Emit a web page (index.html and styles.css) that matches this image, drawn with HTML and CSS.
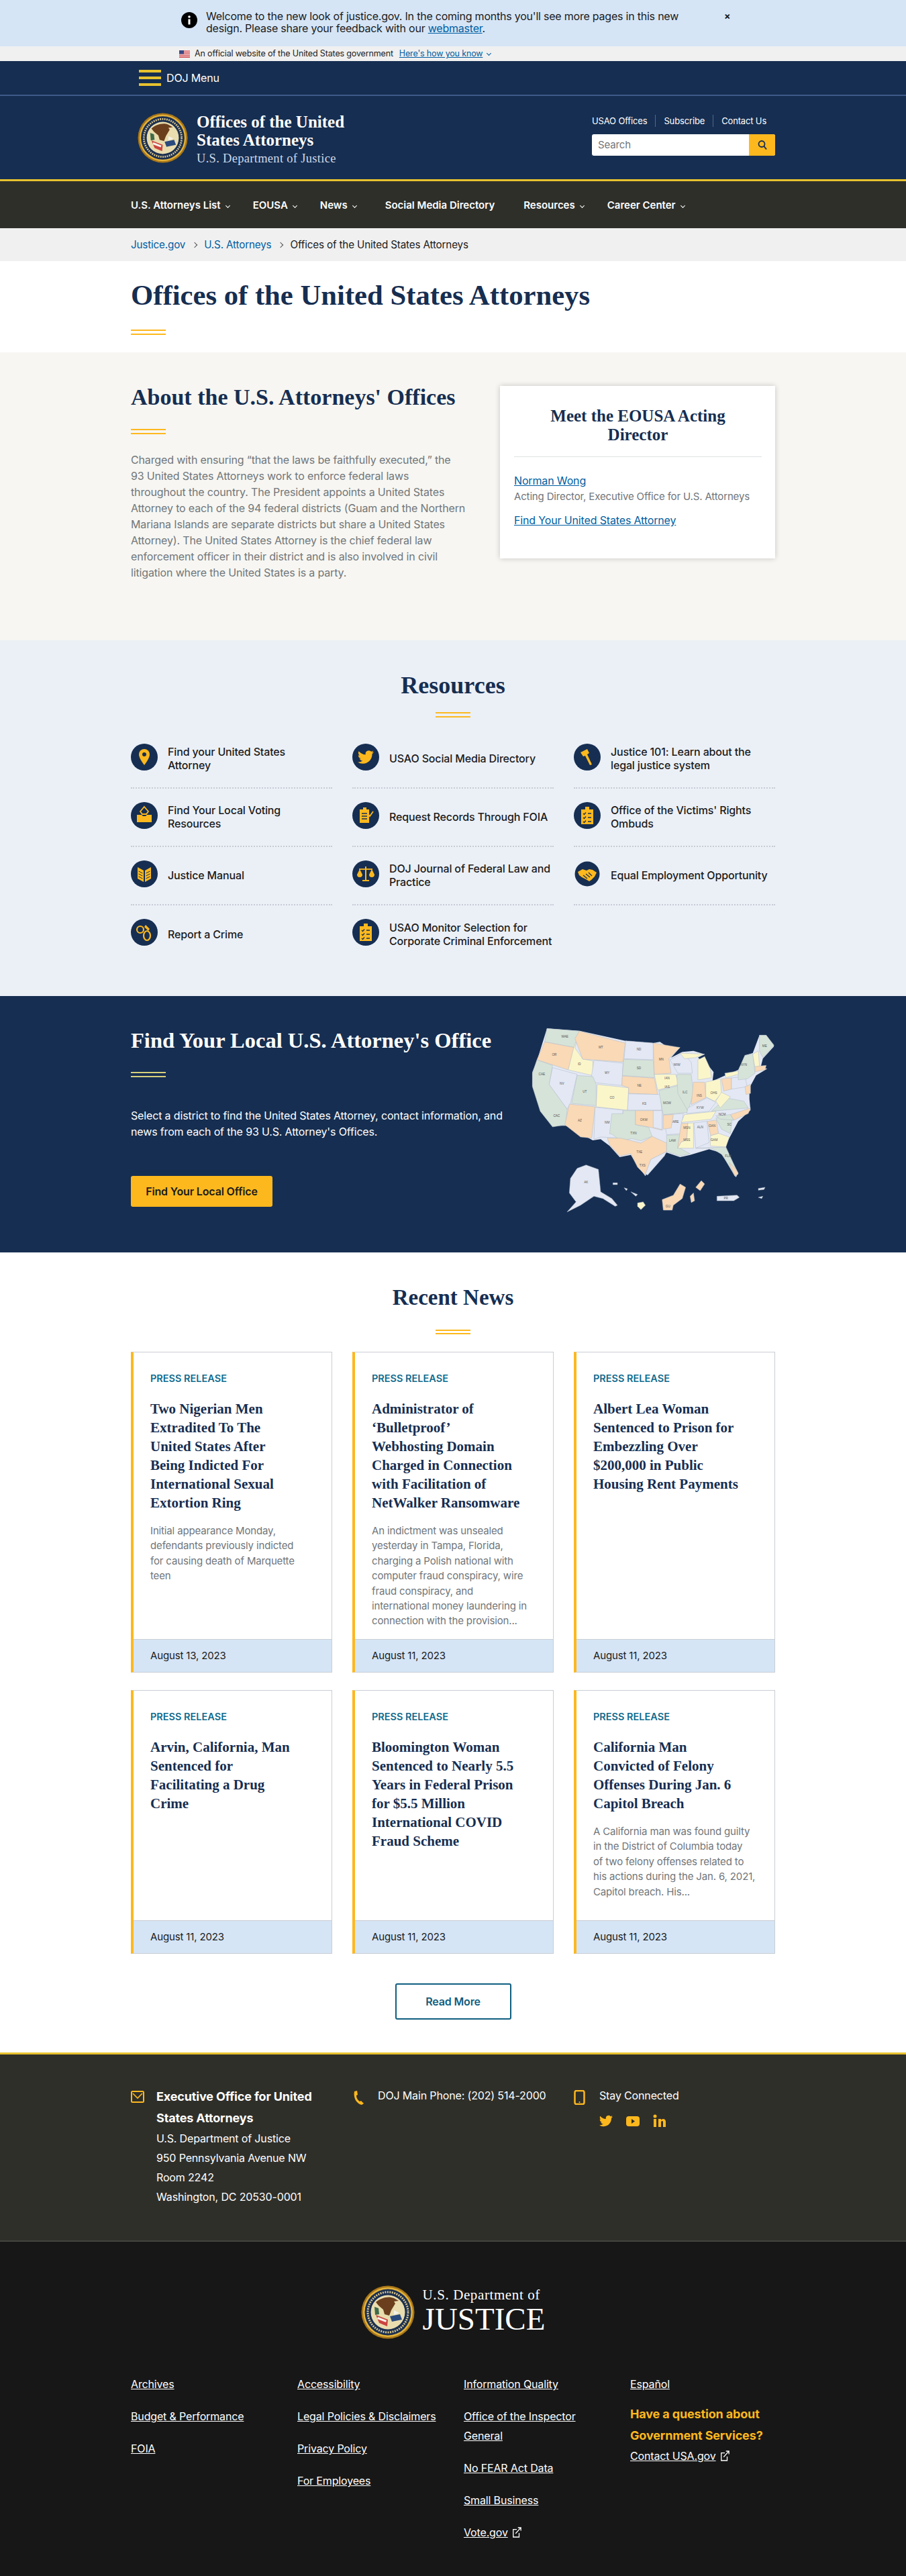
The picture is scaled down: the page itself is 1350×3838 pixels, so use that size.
FILE: index.html
```html
<!DOCTYPE html>
<html lang="en">
<head>
    <meta charset="UTF-8">
    <meta name="viewport" content="width=device-width, initial-scale=1.0">
    <title>Offices of the United States Attorneys</title>
    <link rel="stylesheet" href="styles.css">
</head>
<body>
    <svg class="defs" width="0" height="0">
        <symbol id="seal" viewBox="0 0 80 80">
            <circle cx="40" cy="40" r="39.500" fill="#a8761a"/>
            <circle cx="40" cy="40" r="37" fill="#e4b23a"/>
            <circle cx="40" cy="40" r="34.500" fill="#1b2f50"/>
            <circle cx="40" cy="40" r="30" fill="none" stroke="#d9c68c" stroke-width="3" stroke-dasharray="2 1.500"/>
            <circle cx="40" cy="40" r="25.500" fill="#e9dcae"/>
            <path d="M22 25c7-6 18-10 27-6l7 4-7 1 2 3-6 10-3 8-7-2-2-7-7-6z" fill="#6b3f1e"/>
            <path d="M20 32l6 2 1 9-6 1z" fill="#3d6a4a"/>
            <path d="M22 44l18 7-1 10-12-5z" fill="#c9443f"/>
            <path d="M25 47l13 5-1 3-13-5z" fill="#f4f1ea"/>
            <path d="M43 46l15-3 3 8-15 3z" fill="#2a4a7e"/>
            <path d="M49 37l8 4-8 3z" fill="#f4f1ea"/>
        </symbol>
        <symbol id="twitter" viewBox="0 0 24 24">
            <path d="M23.953 4.57a10 10 0 01-2.825.775 4.958 4.958 0 002.163-2.723c-.951.555-2.005.959-3.127 1.184a4.92 4.92 0 00-8.384 4.482C7.69 8.095 4.067 6.13 1.64 3.162a4.822 4.822 0 00-.666 2.475c0 1.71.87 3.213 2.188 4.096a4.904 4.904 0 01-2.228-.616v.06a4.923 4.923 0 003.946 4.827 4.996 4.996 0 01-2.212.085 4.936 4.936 0 004.604 3.417 9.867 9.867 0 01-6.102 2.105c-.39 0-.779-.023-1.17-.067a13.995 13.995 0 007.557 2.209c9.053 0 13.998-7.496 13.998-13.985 0-.21 0-.42-.015-.63A9.935 9.935 0 0024 4.59z" fill="#fdb81e"/>
        </symbol>
        <symbol id="checklist" viewBox="0 0 40 40">
            <path d="M11 11h6V7h6v4h6v22H11z" fill="#fdb81e"/>
            <path d="M14 17l1.500 1.500 2.500-3M14 23l1.500 1.500 2.500-3M14 29l1.500 1.500 2.500-3" stroke="#162e51" stroke-width="1.300" fill="none"/>
            <path d="M21 17h5M21 23h5M21 29h5" stroke="#162e51" stroke-width="1.600"/>
        </symbol>
        <symbol id="external" viewBox="0 0 16 18">
            <path d="M8 4H2v13h10v-7" fill="none" stroke="#fff" stroke-width="1.500"/>
            <path d="M6 11L14 2M10 1h5v5" fill="none" stroke="#fff" stroke-width="1.500"/>
        </symbol>
    </svg>

    <div class="notice">
        <div class="notice-inner">
            <svg class="notice-icon" width="24" height="24" viewBox="0 0 24 24"><circle cx="12" cy="12" r="12" fill="#000"/><circle cx="12" cy="7" r="1.800" fill="#fff"/><rect x="10.500" y="10.500" width="3" height="8" fill="#fff"/></svg>
            <p>Welcome to the new look of justice.gov. In the coming months you'll see more pages in this new<br>design. Please share your feedback with our <a href="#">webmaster</a>.</p>
            <span class="notice-close">×</span>
        </div>
    </div>

    <div class="official">
        <div class="official-inner">
            <svg class="flag" width="16" height="11" viewBox="0 0 16 11">
                <rect width="16" height="11" fill="#fff"/>
                <path d="M0 .8h16M0 2.500h16M0 4.200h16M0 5.900h16M0 7.600h16M0 9.300h16M0 10.600h16" stroke="#c8343b" stroke-width=".9"/>
                <rect width="7" height="5.500" fill="#3a4a86"/>
            </svg>
            <span>An official website of the United States government</span>
            <a href="#">Here's how you know</a>
            <span class="caret caret-blue"></span>
        </div>
    </div>

    <div class="menu-bar">
        <div class="wrap menu-inner">
            <span class="burger"><i></i><i></i><i></i></span>
            <span>DOJ Menu</span>
        </div>
    </div>

    <header class="site-header">
        <div class="wrap header-inner">
            <div class="brand">
                <svg class="brand-seal" width="75" height="75"><use href="#seal"/></svg>
                <div>
                    <div class="brand-title">Offices of the United<br>States Attorneys</div>
                    <div class="brand-sub">U.S. Department of Justice</div>
                </div>
            </div>
            <div class="header-tools">
                <div class="tool-links">
                    <a href="#">USAO Offices</a>
                    <a href="#">Subscribe</a>
                    <a href="#">Contact Us</a>
                </div>
                <div class="search">
                    <span class="search-input">Search</span>
                    <span class="search-btn">
                        <svg width="16" height="16" viewBox="0 0 16 16"><circle cx="7" cy="6.500" r="4.500" fill="none" stroke="#162e51" stroke-width="1.800"/><path d="M10.500 10l3.500 4.500" stroke="#162e51" stroke-width="2"/></svg>
                    </span>
                </div>
            </div>
        </div>
    </header>

    <nav class="main-nav">
        <div class="wrap nav-inner">
            <a href="#">U.S. Attorneys List<span class="caret"></span></a>
            <a href="#">EOUSA<span class="caret"></span></a>
            <a href="#">News<span class="caret"></span></a>
            <a href="#" class="nav-plain">Social Media Directory</a>
            <a href="#">Resources<span class="caret"></span></a>
            <a href="#">Career Center<span class="caret"></span></a>
        </div>
    </nav>

    <div class="crumbs">
        <div class="wrap crumbs-inner">
            <a href="#">Justice.gov</a>
            <span class="chev"></span>
            <a href="#">U.S. Attorneys</a>
            <span class="chev"></span>
            <span>Offices of the United States Attorneys</span>
        </div>
    </div>

    <section class="title-block wrap">
        <h1>Offices of the United States Attorneys</h1>
        <div class="rule"></div>
    </section>

    <section class="about">
        <div class="wrap about-inner">
            <div class="about-text">
                <h2>About the U.S. Attorneys' Offices</h2>
                <div class="rule"></div>
                <p>Charged with ensuring “that the laws be faithfully executed,” the<br>93 United States Attorneys work to enforce federal laws<br>throughout the country. The President appoints a United States<br>Attorney to each of the 94 federal districts (Guam and the Northern<br>Mariana Islands are separate districts but share a United States<br>Attorney). The United States Attorney is the chief federal law<br>enforcement officer in their district and is also involved in civil<br>litigation where the United States is a party.</p>
            </div>
            <aside class="about-card">
                <h3>Meet the EOUSA Acting Director</h3>
                <a href="#" class="person">Norman Wong</a>
                <div class="person-role">Acting Director, Executive Office for U.S. Attorneys</div>
                <a href="#" class="find-link">Find Your United States Attorney</a>
            </aside>
        </div>
    </section>

    <section class="resources">
        <div class="wrap">
            <h2 class="center">Resources</h2>
            <div class="rule rule-center"></div>
            <div class="res-grid">
                <a href="#" class="res-item">
                    <svg class="res-icon" viewBox="0 0 40 40"><circle cx="20" cy="20" r="20" fill="#162e51"/><path d="M20 8a8 8 0 00-8 8c0 6 8 16 8 16s8-10 8-16a8 8 0 00-8-8z" fill="#fdb81e"/><circle cx="20" cy="16" r="3" fill="#162e51"/></svg>
                    <span>Find your United States Attorney</span>
                </a>
                <a href="#" class="res-item">
                    <svg class="res-icon" viewBox="0 0 40 40"><circle cx="20" cy="20" r="20" fill="#162e51"/><svg x="8" y="8" width="24" height="24"><use href="#twitter"/></svg></svg>
                    <span>USAO Social Media Directory</span>
                </a>
                <a href="#" class="res-item">
                    <svg class="res-icon" viewBox="0 0 40 40"><circle cx="20" cy="20" r="20" fill="#162e51"/><path d="M10 13l10-5 3 6-3 2 7 15-3 1-7-14-3 1z" fill="#fdb81e"/></svg>
                    <span>Justice 101: Learn about the legal justice system</span>
                </a>
                <a href="#" class="res-item">
                    <svg class="res-icon" viewBox="0 0 40 40"><circle cx="20" cy="20" r="20" fill="#162e51"/><path d="M20 7l6 7-3 4h-6l-3-4z" fill="none" stroke="#fdb81e" stroke-width="1.800"/><path d="M9 19h7l2 2h4l2-2h7v11H9z" fill="#fdb81e"/></svg>
                    <span>Find Your Local Voting Resources</span>
                </a>
                <a href="#" class="res-item">
                    <svg class="res-icon" viewBox="0 0 40 40"><circle cx="20" cy="20" r="20" fill="#162e51"/><path d="M11 11h5V8h5v3h4v20H11z" fill="#fdb81e"/><path d="M14 17h8M14 21h8M14 25h8" stroke="#162e51" stroke-width="1.600"/><path d="M24 19l2 2 5-7" stroke="#fdb81e" stroke-width="1.800" fill="none"/></svg>
                    <span>Request Records Through FOIA</span>
                </a>
                <a href="#" class="res-item">
                    <svg class="res-icon" viewBox="0 0 40 40"><circle cx="20" cy="20" r="20" fill="#162e51"/><use href="#checklist"/></svg>
                    <span>Office of the Victims' Rights Ombuds</span>
                </a>
                <a href="#" class="res-item">
                    <svg class="res-icon" viewBox="0 0 40 40"><circle cx="20" cy="20" r="20" fill="#162e51"/><path d="M10 10l9 5v17l-9-5zM30 10l-9 5v17l9-5z" fill="#fdb81e"/><path d="M11.500 16l6 3M11.500 20l6 3M11.500 24l6 3M28.500 16l-6 3M28.500 20l-6 3M28.500 24l-6 3" stroke="#162e51" stroke-width="1"/></svg>
                    <span>Justice Manual</span>
                </a>
                <a href="#" class="res-item">
                    <svg class="res-icon" viewBox="0 0 40 40"><circle cx="20" cy="20" r="20" fill="#162e51"/><path d="M19 9h2v20h4v2H15v-2h4z" fill="#fdb81e"/><path d="M10 13h20" stroke="#fdb81e" stroke-width="1.800"/><path d="M7 21l4-8 4 8a4 4 0 01-8 0zM25 21l4-8 4 8a4 4 0 01-8 0z" fill="#fdb81e"/></svg>
                    <span>DOJ Journal of Federal Law and Practice</span>
                </a>
                <a href="#" class="res-item">
                    <svg class="res-icon" viewBox="0 0 40 40"><circle cx="20" cy="20" r="18.500" fill="#162e51"/><path d="M6 17l7-4 6 2 4-2 5 1 6 4-3 6-5 5-3 2-5-3-6-3-4-3z" fill="#fdb81e"/><path d="M14 22l6 5M18 20l6 5M22 18l5 5" stroke="#162e51" stroke-width="1.200"/></svg>
                    <span>Equal Employment Opportunity</span>
                </a>
                <a href="#" class="res-item">
                    <svg class="res-icon" viewBox="0 0 40 40"><circle cx="20" cy="20" r="20" fill="#162e51"/><circle cx="14" cy="16" r="5" fill="none" stroke="#fdb81e" stroke-width="2.200"/><ellipse cx="24" cy="25" rx="5" ry="7" fill="none" stroke="#fdb81e" stroke-width="2.200"/><path d="M22 9l6 6-2 3-6-6z" fill="#fdb81e"/></svg>
                    <span>Report a Crime</span>
                </a>
                <a href="#" class="res-item">
                    <svg class="res-icon" viewBox="0 0 40 40"><circle cx="20" cy="20" r="20" fill="#162e51"/><use href="#checklist"/></svg>
                    <span>USAO Monitor Selection for Corporate Criminal Enforcement</span>
                </a>
            </div>
        </div>
    </section>

    <section class="find-office">
        <div class="wrap find-inner">
            <div class="find-text">
                <h2>Find Your Local U.S. Attorney's Office</h2>
                <div class="rule rule-pale"></div>
                <p>Select a district to find the United States Attorney, contact information, and news from each of the 93 U.S. Attorney's Offices.</p>
                <a href="#" class="btn-gold">Find Your Local Office</a>
            </div>
            <svg class="us-map" width="400" height="300" viewBox="0 0 1200 900">
                <path class="st-b" d="M105 40l145 10 205 45 125 10 30-5 30 20 60 5-40 45 50-25 50-5 50 15-30 15 50 40 20 25-5 40 45-20 70-30 30-65 35-10 30-80h30l35 50-50 55-10 40 30 5-50 30-30 55v50l5 50-55 50-40 75-20 45 60 110-10 20-50-80-20-30-50-15-85 25-45 10-60-20-65 40-30 65-35-45-30-50-50 10-45-50-40-30-35 5-120-65h-60l-55-70-35-110v-60l20-50z"/>
                <g stroke="#aeb8c6" stroke-width="1.500">
                    <path class="st-g" d="M105 40l145 12-22 73-133-25 5-30z"/>
                    <path class="st-o" d="M95 100l133 25-28 100-140-45z"/>
                    <path class="st-g" d="M60 180l70 25-15 85 80 110-5 70-60 10-55-70-35-110v-60z"/>
                    <path class="st-b" d="M130 215l110 30-30 130-15 25-80-110z"/>
                    <path class="st-y" d="M250 52l-20 75 35 50 45 8v65l-110-25 25-100z"/>
                    <path class="st-o" d="M250 52l205 53-10 85-135-10-45-3-35-92z"/>
                    <path class="st-b" d="M315 182l130 13-5 100-140-15z"/>
                    <path class="st-g" d="M240 250l70 5 15 35v95l-110-10z"/>
                    <path class="st-y" d="M330 290l140 15-5 100-140-15z"/>
                    <path class="st-o" d="M205 378l115 12-15 140-50-5-70-55z"/>
                    <path class="st-b" d="M320 392l125 13-10 125-90-5-30 10z"/>
                    <path class="st-b" d="M457 95l123 10v75l-130-5z"/>
                    <path class="st-g" d="M448 178l132 4 5 78-143-10z"/>
                    <path class="st-o" d="M442 252l143 10 15 73-130-5v-25l-30-10z"/>
                    <path class="st-b" d="M470 332l142 3 6 70-153 0z"/>
                    <path class="st-o" d="M500 407h80l40 1v87l-60-15-60-10z"/>
                    <path class="st-b" d="M580 407h40v85l-40-10z"/>
                    <path class="st-g" d="M445 407h55v63l60 12 15 40-50 20-40-10-50 10-40-30-10-1 10-90h50z"/>
                    <path class="st-o" d="M375 530l60 0 50 12 40 10 50-30 65 30 0 38-70 35-25 70-35-35-30-60-50 10-45-50z"/>
                    <path class="st-b" d="M570 625l70-35-10 20-75 85-10-5z"/>
                    <path class="st-o" d="M580 105l120 20-50 50 10 65-75 5z"/>
                    <path class="st-y" d="M585 245l95 0 15 45-95 25z"/>
                    <path class="st-g" d="M605 318l85-23 30 65 15 55-110 10z"/>
                    <path class="st-b" d="M625 427l90-7-15 90-60 5z"/>
                    <path class="st-o" d="M625 427l45-2-10 60-35 5z"/>
                    <path class="st-g" d="M640 517l60-2-10 55 55 30-45 10-60-20z"/>
                    <path class="st-b" d="M655 180l55-30 40 40 5 50-65 0z"/>
                    <path class="st-g" d="M685 245h65l10 85-25 80-45-80z"/>
                    <path class="st-y" d="M780 180l30-15 25 55 5 40-60 10zM700 150l110 5-40 15-50 5z"/>
                    <path class="st-o" d="M760 280h50l5 70-65 30z"/>
                    <path class="st-y" d="M815 280l65-15 5 65-30 35-40-20z"/>
                    <path class="st-b" d="M735 395l85-45 40 20-30 40-100 10z"/>
                    <path class="st-y" d="M720 425l140-15-20 35-135 15z"/>
                    <path class="st-o" d="M705 465l30-2-5 75-25 10-15 27h-1z"/>
                    <path class="st-y" d="M735 463l25-1v113h-70l15-27 25-10z"/>
                    <path class="st-b" d="M762 462l58-7 10 95-60 25z"/>
                    <path class="st-o" d="M822 455l40-6 10 60-35 10z"/>
                    <path class="st-y" d="M837 519l35-10 48 16-15 45-70-5z"/>
                    <path class="st-g" d="M770 575l135-5 55 120-15 10-55-95-50-30z"/>
                    <path class="st-o" d="M920 640l30 30 10 20-15 10-20-45z"/>
                    <path class="st-g" d="M860 440l75-10-10 80-40-20z"/>
                    <path class="st-o" d="M925 425l90-30-10 25-65 30z"/>
                    <path class="st-g" d="M860 430l65-5 15 25-60-5z"/>
                    <path class="st-g" d="M840 410l65-60 80 15 20 30z"/>
                    <path class="st-y" d="M860 365l25-40 40 20-45 50z"/>
                    <path class="st-o" d="M885 265l45-4 0 50-35 9z"/>
                    <path class="st-b" d="M930 261l60-6 10 45-70 11z"/>
                    <path class="st-g" d="M960 230l30-70 35-5 10 85-35 25-40 5z"/>
                    <path class="st-y" d="M900 240l60-10 0 15-55 15z"/>
                    <path class="st-y" d="M1025 155l25-15 5 70-20 5z"/>
                    <path class="st-o" d="M1035 210l50-5-5 20-45 8z"/>
                    <path class="st-g" d="M1055 70l30 0 35 45-50 55-15-30z"/>
                    <path class="st-o" d="M990 300l25-10 0 40-20 5z"/>
                    <path class="st-b" d="M210 710l30-45 40-15 55 20 10 100 50 30 25 30-10 5-55-35-40-10-60 40-60 30 40-45-30-40z"/>
                    <path class="st-y" d="M510 820l25-5 10 15-20 20-15-15z"/>
                    <path class="st-b" d="M400 730h20v8h-20zM450 752l15 5-5 8zM480 770l30 12-8 8z"/>
                    <path class="st-o" d="M620 805l50-20 30-50 25 15-15 50-40 30-5 22h-40z"/>
                    <path class="st-o" d="M745 790l15-15 5 35-15 8zM770 750l25-30 15 15-20 30z"/>
                    <path class="st-b" d="M865 790l90-5 10 10-25 15h-75z"/>
                    <path class="st-b" d="M1050 755l30-5-5 10-25 3zM1050 795l20-5-5 10z"/>
                </g>
                <g class="map-labels">
                    <text x="185" y="80">WAE</text><text x="138" y="163">OR</text><text x="82" y="250">CAE</text><text x="172" y="292">NV</text><text x="250" y="203">ID</text><text x="346" y="130">MT</text><text x="374" y="244">WY</text><text x="274" y="328">UT</text><text x="396" y="353">CO</text><text x="252" y="457">AZ</text><text x="374" y="466">NM</text><text x="516" y="137">ND</text><text x="516" y="221">SD</text><text x="518" y="301">NE</text><text x="540" y="380">KS</text><text x="538" y="452">OKW</text><text x="492" y="512">TXN</text><text x="518" y="596">TXE</text><text x="532" y="657">TXS</text><text x="616" y="183">MN</text><text x="642" y="266">IAN</text><text x="642" y="305">IAS</text><text x="642" y="377">MOW</text><text x="680" y="462">ARE</text><text x="666" y="545">LAW</text><text x="686" y="206">WIW</text><text x="722" y="331">ILC</text><text x="790" y="486">ALN</text><text x="730" y="490">MSN</text><text x="730" y="543">MSS</text><text x="843" y="480">GAN</text><text x="852" y="543">GAM</text><text x="915" y="615">FLM</text><text x="920" y="475">SC</text><text x="888" y="430">NCM</text><text x="790" y="398">KYW</text><text x="786" y="345">INS</text><text x="851" y="334">OHS</text><text x="985" y="207">NYN</text><text x="1078" y="122">ME</text><text x="280" y="733">AK</text><text x="905" y="803">PR</text><text x="646" y="840">GU</text><text x="148" y="435">CAC</text>
                </g>
            </svg>
        </div>
    </section>

    <section class="news">
        <div class="wrap">
            <h2 class="center news-title">Recent News</h2>
            <div class="rule rule-center rule-thin"></div>
            <div class="news-grid">
                <article class="card">
                    <div class="card-body">
                        <div class="card-label">PRESS RELEASE</div>
                        <h3>Two Nigerian Men<br>Extradited To The<br>United States After<br>Being Indicted For<br>International Sexual<br>Extortion Ring</h3>
                        <p>Initial appearance Monday,<br>defendants previously indicted<br>for causing death of Marquette<br>teen</p>
                    </div>
                    <div class="card-date">August 13, 2023</div>
                </article>
                <article class="card">
                    <div class="card-body">
                        <div class="card-label">PRESS RELEASE</div>
                        <h3>Administrator of<br>‘Bulletproof’<br>Webhosting Domain<br>Charged in Connection<br>with Facilitation of<br>NetWalker Ransomware</h3>
                        <p>An indictment was unsealed<br>yesterday in Tampa, Florida,<br>charging a Polish national with<br>computer fraud conspiracy, wire<br>fraud conspiracy, and<br>international money laundering in<br>connection with the provision...</p>
                    </div>
                    <div class="card-date">August 11, 2023</div>
                </article>
                <article class="card">
                    <div class="card-body">
                        <div class="card-label">PRESS RELEASE</div>
                        <h3>Albert Lea Woman<br>Sentenced to Prison for<br>Embezzling Over<br>$200,000 in Public<br>Housing Rent Payments</h3>
                    </div>
                    <div class="card-date">August 11, 2023</div>
                </article>
                <article class="card">
                    <div class="card-body">
                        <div class="card-label">PRESS RELEASE</div>
                        <h3>Arvin, California, Man<br>Sentenced for<br>Facilitating a Drug<br>Crime</h3>
                    </div>
                    <div class="card-date">August 11, 2023</div>
                </article>
                <article class="card">
                    <div class="card-body">
                        <div class="card-label">PRESS RELEASE</div>
                        <h3>Bloomington Woman<br>Sentenced to Nearly 5.5<br>Years in Federal Prison<br>for $5.5 Million<br>International COVID<br>Fraud Scheme</h3>
                    </div>
                    <div class="card-date">August 11, 2023</div>
                </article>
                <article class="card">
                    <div class="card-body">
                        <div class="card-label">PRESS RELEASE</div>
                        <h3>California Man<br>Convicted of Felony<br>Offenses During Jan. 6<br>Capitol Breach</h3>
                        <p>A California man was found guilty<br>in the District of Columbia today<br>of two felony offenses related to<br>his actions during the Jan. 6, 2021,<br>Capitol breach. His...</p>
                    </div>
                    <div class="card-date">August 11, 2023</div>
                </article>
            </div>
            <div class="more"><a href="#" class="btn-outline">Read More</a></div>
        </div>
    </section>

    <footer>
        <div class="foot-contact">
            <div class="wrap contact-grid">
                <div class="contact-col">
                    <svg class="contact-icon" width="20" height="20" viewBox="0 0 20 20"><rect x="1" y="2" width="18" height="16" rx="1.500" fill="none" stroke="#fdb81e" stroke-width="2"/><path d="M3 5l7 7 7-7" fill="none" stroke="#fdb81e" stroke-width="1.600"/></svg>
                    <div class="contact-text">
                        <strong>Executive Office for United States Attorneys</strong>
                        <div class="addr">U.S. Department of Justice</div>
                        <div class="addr">950 Pennsylvania Avenue NW</div>
                        <div class="addr">Room 2242</div>
                        <div class="addr">Washington, DC 20530-0001</div>
                    </div>
                </div>
                <div class="contact-col">
                    <svg class="contact-icon" width="20" height="22" viewBox="0 0 20 22"><path d="M3 2l4-1 1 6-2 1c0 4 2 7 5 9l2-1 4 4-3 2C7 21 1 12 3 2z" fill="#fdb81e"/></svg>
                    <div class="contact-line">DOJ Main Phone: (202) 514-2000</div>
                </div>
                <div class="contact-col">
                    <svg class="contact-icon" width="20" height="22" viewBox="0 0 20 22"><rect x="1.500" y="1" width="14" height="20" rx="2.500" fill="none" stroke="#fdb81e" stroke-width="2.500"/><circle cx="8.500" cy="18" r="1" fill="#fdb81e"/></svg>
                    <div>
                        <div class="contact-line">Stay Connected</div>
                        <div class="social">
                            <svg width="20" height="20"><use href="#twitter"/></svg>
                            <svg width="20" height="20" viewBox="0 0 20 20"><rect x="0" y="3" width="20" height="15" rx="4" fill="#fdb81e"/><path d="M8 7l5 3.500-5 3.500z" fill="#2f2f2a"/></svg>
                            <svg width="20" height="20" viewBox="0 0 20 20"><circle cx="3" cy="3" r="2.500" fill="#fdb81e"/><path d="M1 7h4v12H1zM8 7h4v2c1-3 7-3 7 2v8h-4v-7c0-3-3-2-3 0v7H8z" fill="#fdb81e"/></svg>
                        </div>
                    </div>
                </div>
            </div>
        </div>

        <div class="foot-main">
            <div class="foot-logo">
                <svg width="80" height="80"><use href="#seal"/></svg>
                <div class="foot-logo-text">
                    <div class="foot-dept">U.S. Department of</div>
                    <div class="foot-justice">JUSTICE</div>
                </div>
            </div>
            <div class="wrap foot-links">
                <ul>
                    <li><a href="#">Archives</a></li>
                    <li><a href="#">Budget &amp; Performance</a></li>
                    <li><a href="#">FOIA</a></li>
                </ul>
                <ul>
                    <li><a href="#">Accessibility</a></li>
                    <li><a href="#">Legal Policies &amp; Disclaimers</a></li>
                    <li><a href="#">Privacy Policy</a></li>
                    <li><a href="#">For Employees</a></li>
                </ul>
                <ul>
                    <li><a href="#">Information Quality</a></li>
                    <li><a href="#">Office of the Inspector General</a></li>
                    <li><a href="#">No FEAR Act Data</a></li>
                    <li><a href="#">Small Business</a></li>
                    <li><a href="#">Vote.gov</a> <svg class="ext" width="14" height="16"><use href="#external"/></svg></li>
                </ul>
                <ul class="foot-last">
                    <li><a href="#">Español</a></li>
                    <li class="question">Have a question about Government Services?</li>
                    <li><a href="#">Contact USA.gov</a> <svg class="ext" width="14" height="16"><use href="#external"/></svg></li>
                </ul>
            </div>
        </div>
    </footer>
</body>
</html>
```

FILE: styles.css
```css
* {
    box-sizing: border-box;
}

body {
    margin: 0;
    font-family: Inter, "Liberation Sans", sans-serif;
    font-size: 16px;
    letter-spacing: -0.15px;
    color: #1b1b1b;
    background-color: #ffffff;
}

a {
    color: #005ea2;
}

h1, h2, h3 {
    margin: 0;
    font-family: "Liberation Serif", serif;
    font-weight: bold;
    color: #162e51;
    letter-spacing: 0;
}

p {
    margin: 0;
}

.defs {
    position: absolute;
}

.wrap {
    width: 960px;
    margin: 0 auto;
}

/* Top strips */
.notice {
    height: 69px;
    background-color: #d5e5f6;
}

.notice-inner {
    width: 816px;
    margin: 0 auto;
    padding-top: 15px;
    padding-left: 3px;
    display: flex;
    gap: 13px;
    line-height: 18px;
}

.notice-inner p {
    width: 712px;
    font-size: 16px;
    letter-spacing: -0.22px;
    white-space: nowrap;
}

.notice-icon {
    flex: none;
    margin-top: 3px;
}

.notice-close {
    margin-left: 55px;
    font-weight: bold;
    font-size: 14px;
}

.official {
    height: 22px;
    background-color: #f0f0f0;
    font-size: 12.5px;
    line-height: 22px;
}

.official-inner {
    width: 816px;
    margin: 0 auto;
    display: flex;
    align-items: center;
    gap: 7px;
}

.flag {
    flex: none;
}

.official a {
    margin-left: 2px;
}

.caret {
    display: inline-block;
    width: 5px;
    height: 5px;
    margin-left: 8px;
    margin-bottom: 2px;
    border-right: 1.5px solid #ffffff;
    border-bottom: 1.5px solid #ffffff;
    transform: rotate(45deg);
}

.caret-blue {
    margin-left: 0;
    border-color: #005ea2;
}

.menu-bar {
    height: 52px;
    background-color: #162e51;
    border-bottom: 2px solid #3d5a8a;
    color: #ffffff;
}

.menu-inner {
    height: 50px;
    padding-left: 12px;
    display: flex;
    align-items: center;
    gap: 8px;
}

.burger {
    width: 33px;
    display: flex;
    flex-direction: column;
    gap: 6px;
}

.burger i {
    display: block;
    height: 4px;
    background-color: #e7c22e;
}

/* Header */
.site-header {
    height: 124px;
    background-color: #162e51;
    color: #ffffff;
}

.header-inner {
    display: flex;
    justify-content: space-between;
}

.brand {
    display: flex;
    gap: 13px;
    padding-top: 25px;
    padding-left: 10px;
}

.brand-title {
    font-family: "Liberation Serif", serif;
    font-weight: bold;
    font-size: 25px;
    line-height: 27px;
    letter-spacing: 0;
}

.brand-sub {
    font-family: "Liberation Serif", serif;
    font-size: 18.5px;
    line-height: 28px;
    letter-spacing: 0.3px;
    color: #cdd9ea;
}

.header-tools {
    width: 273px;
    padding-top: 28px;
}

.tool-links {
    display: flex;
    font-size: 13px;
    line-height: 18px;
}

.tool-links a {
    color: #ffffff;
    text-decoration: none;
    padding: 0 12px;
    border-right: 1px solid #52688a;
}

.tool-links a:first-child {
    padding-left: 0;
}

.tool-links a:last-child {
    padding-right: 0;
    border-right: none;
}

.search {
    margin-top: 11px;
    height: 32px;
    display: flex;
    background-color: #ffffff;
    border-radius: 3px;
    overflow: hidden;
}

.search-input {
    flex: 1;
    padding-left: 9px;
    line-height: 32px;
    font-size: 15px;
    color: #71767a;
}

.search-btn {
    width: 39px;
    background-color: #fdb81e;
    display: flex;
    align-items: center;
    justify-content: center;
}

.main-nav {
    height: 73px;
    border-top: 3px solid #e7c22e;
    background-color: #2f2f2a;
}

.nav-inner {
    height: 70px;
    display: flex;
    align-items: center;
    gap: 35px;
}

.main-nav a {
    color: #ffffff;
    text-decoration: none;
    font-weight: 600;
    font-size: 15px;
    letter-spacing: 0;
    white-space: nowrap;
}

.main-nav .nav-plain {
    margin: 0 8px;
}

.crumbs {
    height: 49px;
    background-color: #f0f0f0;
    font-size: 15.2px;
}

.crumbs-inner {
    height: 49px;
    display: flex;
    align-items: center;
    gap: 11px;
}

.crumbs a {
    text-decoration: none;
}

.chev {
    width: 6px;
    height: 6px;
    border-top: 1px solid #555555;
    border-right: 1px solid #555555;
    transform: rotate(45deg);
}

/* Gold double rule */
.rule {
    width: 52px;
    height: 8px;
    border-top: 2px solid #fdb81e;
    border-bottom: 2px solid #fdb81e;
}

.rule-center {
    margin: 20px auto 0;
}

.rule-pale {
    border-color: #d8cf7a;
}

.rule-thin {
    height: 7px;
    margin-top: 28px;
}

.center {
    text-align: center;
}

/* Page title */
.title-block {
    height: 136px;
    padding-top: 25px;
}

.title-block h1 {
    font-size: 42.7px;
    line-height: 52px;
}

.title-block .rule {
    margin-top: 25px;
}

/* About */
.about {
    height: 429px;
    background-color: #f7f6f2;
    padding-top: 50px;
}

.about-inner {
    display: flex;
    justify-content: space-between;
}

.about-text {
    width: 505px;
}

.about-text h2 {
    font-size: 34px;
    line-height: 34px;
}

.about-text .rule {
    margin-top: 30px;
}

.about-text p {
    margin-top: 26px;
    line-height: 24px;
    color: #71767a;
    white-space: nowrap;
}

.about-card {
    width: 410px;
    height: 257px;
    background-color: #ffffff;
    box-shadow: 0 0 8px rgba(0, 0, 0, 0.2);
    padding: 31px 20px 0 21px;
    font-size: 15px;
}

.about-card h3 {
    font-size: 25px;
    line-height: 28px;
    text-align: center;
    padding: 0 30px 18px;
    border-bottom: 1px solid #dfe1e2;
    margin-bottom: 23px;
}

.person, .find-link {
    display: block;
    line-height: 24px;
    font-size: 16px;
}

.person-role {
    line-height: 24px;
    color: #71767a;
}

.find-link {
    margin-top: 11px;
}

/* Resources */
.resources {
    height: 530px;
    padding-top: 47px;
    background-color: #ebf0f7;
}

.resources h2 {
    font-size: 36px;
    line-height: 40px;
}

.res-grid {
    margin-top: 39px;
    display: grid;
    grid-template-columns: repeat(3, 300px);
    column-gap: 30px;
    row-gap: 20px;
}

.res-item {
    display: flex;
    align-items: flex-start;
    gap: 15px;
    height: 67px;
    padding-bottom: 25px;
    border-bottom: 2px dotted #c6ccd5;
    color: #1b1b1b;
    text-decoration: none;
    font-weight: 500;
    font-size: 16px;
    line-height: 20px;
}

.res-item span {
    align-self: center;
    max-width: 243px;
    padding-top: 3px;
}

.res-item:nth-child(n+10) {
    border-bottom: none;
}

.res-icon {
    flex: none;
    width: 40px;
    height: 40px;
}

/* Find office */
.find-office {
    height: 382px;
    padding-top: 46px;
    background-color: #162e51;
    color: #ffffff;
}

.find-inner {
    display: flex;
    justify-content: space-between;
}

.find-text {
    width: 565px;
}

.find-text h2 {
    color: #ffffff;
    font-size: 32.5px;
    line-height: 40px;
}

.find-text .rule {
    margin-top: 27px;
}

.find-text p {
    margin-top: 45px;
    line-height: 24px;
}

.btn-gold {
    display: inline-block;
    margin-top: 54px;
    width: 211px;
    height: 46px;
    background-color: #fdb81e;
    border-radius: 3px;
    color: #1b1b1b;
    font-weight: 600;
    line-height: 46px;
    text-align: center;
    text-decoration: none;
    font-size: 16px;
}

.us-map {
    flex: none;
    margin-top: -11px;
    margin-right: -25px;
}

.st-o { fill: #f9d9b6; }
.st-g { fill: #d6e3d8; }
.st-b { fill: #e3e8f4; }
.st-y { fill: #fbf6ca; }

.map-labels text {
    font-family: "Liberation Sans", sans-serif;
    font-size: 14px;
    text-anchor: middle;
    fill: #555555;
    letter-spacing: 0;
}

/* News */
.news {
    height: 1192px;
    padding-top: 47px;
}

.news-title {
    font-size: 33px;
    line-height: 40px;
}

.news-grid {
    margin-top: 26px;
    display: grid;
    grid-template-columns: repeat(3, 300px);
    grid-template-rows: 478px 393px;
    column-gap: 30px;
    row-gap: 26px;
}

.card {
    display: flex;
    flex-direction: column;
    border: 1px solid #c9ced4;
    border-left: 4px solid #fdb81e;
}

.card-body {
    flex: 1;
    padding: 29px 15px 0 25px;
}

.card-label {
    font-size: 14.5px;
    font-weight: 600;
    line-height: 20px;
    color: #0f6b8e;
    letter-spacing: 0;
}

.card h3 {
    margin-top: 21px;
    font-size: 21px;
    line-height: 28px;
    white-space: nowrap;
}

.card p {
    margin-top: 17px;
    font-size: 15px;
    line-height: 22.4px;
    color: #71767a;
    white-space: nowrap;
}

.card-date {
    height: 49px;
    padding-left: 25px;
    border-top: 1px solid #c9ced4;
    background-color: #d5e5f6;
    font-size: 15px;
    line-height: 48px;
}

.more {
    margin-top: 44px;
    text-align: center;
}

.btn-outline {
    display: inline-block;
    width: 173px;
    height: 54px;
    border: 2px solid #0f5e80;
    border-radius: 3px;
    color: #0f5e80;
    font-weight: 600;
    font-size: 16px;
    line-height: 50px;
    text-decoration: none;
}

/* Footer */
.foot-contact {
    height: 282px;
    padding-top: 47px;
    border-top: 3px solid #e7c22e;
    border-bottom: 2px solid #44443f;
    background-color: #2f2f2a;
    color: #ffffff;
    font-size: 16px;
}

.contact-grid {
    display: grid;
    grid-template-columns: repeat(3, 300px);
    column-gap: 30px;
}

.contact-col {
    display: flex;
    gap: 18px;
}

.contact-text {
    max-width: 245px;
}

.contact-icon {
    flex: none;
    margin-top: 6px;
}

.contact-col strong {
    display: block;
    font-size: 18px;
    line-height: 32px;
    font-weight: 700;
}

.addr {
    line-height: 29px;
}

.contact-line {
    line-height: 28px;
}

.social {
    margin-top: 14px;
    display: flex;
    gap: 20px;
}

.foot-main {
    height: 498px;
    padding-top: 65px;
    background-color: #171717;
    color: #ffffff;
}

.foot-logo {
    display: flex;
    justify-content: center;
    gap: 12px;
}

.foot-logo-text {
    font-family: "Liberation Serif", serif;
    letter-spacing: 0;
}

.foot-dept {
    font-size: 21px;
    line-height: 28px;
    letter-spacing: 0.6px;
}

.foot-justice {
    font-size: 47px;
    line-height: 46px;
    margin-top: -1px;
}

.foot-links {
    margin-top: 53px;
    display: grid;
    grid-template-columns: repeat(4, 218px);
    column-gap: 30px;
    font-size: 16px;
    line-height: 29px;
}

.foot-links ul {
    list-style: none;
    margin: 0;
    padding: 0;
}

.foot-links li {
    margin-bottom: 19px;
}

.foot-links a {
    color: #ffffff;
}

.foot-last li {
    margin-bottom: 14px;
}

.foot-last li.question {
    margin-bottom: 0;
    color: #fdb81e;
    font-weight: 700;
    font-size: 18px;
    line-height: 32px;
}

.ext {
    vertical-align: -2px;
    margin-left: 2px;
}
```
